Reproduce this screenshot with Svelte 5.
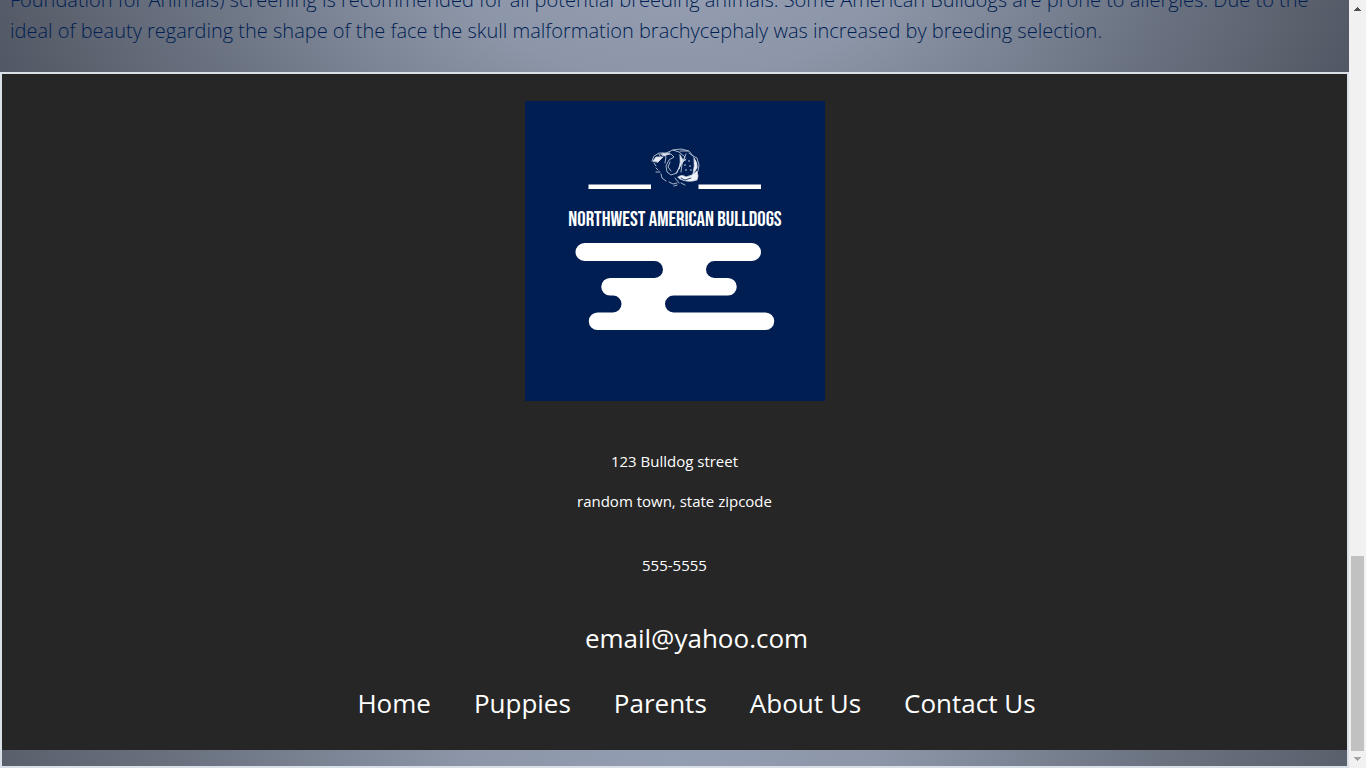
<script>
  const links = ['Home', 'Puppies', 'Parents', 'About Us', 'Contact Us'];
</script>

<div class="window">
  <div class="page">
    <section class="health">
      <p>Foundation for Animals) screening is recommended for all potential breeding animals. Some American Bulldogs are prone to allergies. Due to the ideal of beauty regarding the shape of the face the skull malformation brachycephaly was increased by breeding selection.</p>
    </section>

    <div class="frame">
      <footer>
        <svg class="logo" viewBox="0 0 300 300" role="img" aria-label="Northwest American Bulldogs">
          <rect width="300" height="300" fill="#001e52" />
          <path d="M63.500 83.500H126v4.500H63.500zM173.500 83.500H236v4.500h-62.500z" fill="#fff" />
          <g fill="none" stroke="#d3dae7" stroke-width=".8" stroke-linecap="round" stroke-linejoin="round">
            <path d="M127 60l2-5 5-3 7 0 7-3 8-1 8 2 4 5 4 2 2 7-1 6-4 5M129 62l2 3M131 67l2 2M134 53l2 4-3 4M138 52l3 4-1 6M141 54l5-1 3 3-5 3-3 6 1 6 4 3 6-2 3-8 6-6M148 49l6 2 6 5-4 8-5 8M155 50l8 0M131 71l4 0M136 73l1 4 4 3M144 81l4 2 4-1M150 77l4 5M145 61l-2 5 3 4M161 53l-4 10-1 8M164 52l4 3M149 85l3-1M156 82l4 2" />
            <path d="M128 60l3-4 7 0-5 5zM136 53l9-1-6 3zM155 54l3 5-4 9q2-7 1-14z" fill="#e8edf5" />
            <path d="M153 76q4-3 8 0 6-1 11-6l1 5-1 4q-9 3-17-1zM169 57q4 5 3 10l-4 6q2-8 1-16z" fill="#f2f5fa" />
            <path d="M156 77l4 2 6-2" stroke="#001e52" />
          </g>
          <g fill="#d3dae7">
            <circle cx="160" cy="59" r=".8" /><circle cx="164" cy="60" r=".8" /><circle cx="160" cy="64" r=".8" />
            <circle cx="165" cy="65" r=".8" /><circle cx="161" cy="69" r=".8" /><circle cx="166" cy="69" r=".8" />
          </g>
          <text x="150" y="125" text-anchor="middle">NORTHWEST AMERICAN BULLDOGS</text>
          <path d="M59.500 142H227a9 9 0 0 1 0 18H189.500a8.500 8.500 0 0 0 0 17H203a8.700 8.700 0 0 1 0 17.500H148.500a8.500 8.500 0 0 0 0 17H240.500a8.700 8.700 0 0 1 0 17.500H72.500a8.700 8.700 0 0 1 0-17.500H88a8.500 8.500 0 0 0 0-17H85a8.700 8.700 0 0 1 0-17.500H129.500a8.500 8.500 0 0 0 0-17H59.500a9 9 0 0 1 0-18z" fill="#fff" />
        </svg>

        <address>
          <p>123 Bulldog street</p>
          <p>random town, state zipcode</p>
          <p class="phone">555-5555</p>
        </address>

        <div class="links">
          <a class="email" href="mailto:email@yahoo.com">email@yahoo.com</a>
          <nav>
            {#each links as link}
              <a href="#top">{link}</a>
            {/each}
          </nav>
        </div>
      </footer>
    </div>
  </div>

  <div class="scrollbar" aria-hidden="true">
    <svg viewBox="0 0 17 17"><path d="M5 11h7v-1h-1V9h-1V8H9V7H8v1H7v1H6v1H5z" fill="#505050" /></svg>
    <div class="thumb"></div>
    <svg viewBox="0 0 17 17"><path d="M5 6h7v1h-1v1h-1v1H9v1H8V9H7V8H6V7H5z" fill="#a3a3a3" /></svg>
  </div>
</div>

<style>
  :global(body) {
    margin: 0;
    overflow: hidden;
  }

  .window {
    display: flex;
    height: 100vh;
    font-family: "Segoe UI", "Open Sans", "Noto Sans", sans-serif;
  }

  .page {
    flex: 1;
    min-width: 0;
    display: flex;
    flex-direction: column;
  }

  .health {
    display: flex;
    flex-direction: column;
    justify-content: flex-end;
    height: 72px;
    overflow: hidden;
    box-sizing: border-box;
    padding: 0 10px 26px;
    background: radial-gradient(ellipse 780px 460px at 50% -60px, #98a1b6 0%, #8d96a8 30%, #68707f 66%, #5d626f 80%, #484e5b 100%);
  }

  .health p {
    margin: 0;
    color: #001e52;
    font-size: 20px;
    font-weight: 330;
    line-height: 31px;
  }

  .frame {
    flex: 1;
    box-sizing: border-box;
    border: 2px solid #d9e0e8;
    padding-bottom: 16px;
    background: radial-gradient(ellipse 820px 500px at 50% 100%, #939db2 0%, #8d96a8 25%, #6a7280 60%, #5e6370 78%, #484e5b 100%);
  }

  footer {
    display: flex;
    flex-direction: column;
    align-items: center;
    height: 100%;
    box-sizing: border-box;
    padding-top: 27px;
    background: #262626;
    color: #fff;
  }

  .logo {
    display: block;
    width: 300px;
    height: 300px;
    flex: none;
  }

  .logo text {
    fill: #fff;
    font: 400 21px "Bebas Neue", "Roboto", sans-serif;
  }

  address {
    margin-top: 48px;
    font-size: 15px;
    font-style: normal;
    line-height: 24px;
    text-align: center;
  }

  address p {
    margin: 0 0 16px;
  }

  address .phone {
    margin: 40px 0 0;
  }

  .links {
    padding-left: 44px;
    text-align: center;
    font-size: 26px;
    line-height: 40px;
  }

  .email {
    display: block;
    margin-top: 41px;
  }

  nav {
    display: flex;
    justify-content: center;
    gap: 43px;
    margin-top: 25px;
  }

  a {
    color: #fff;
    text-decoration: none;
    white-space: nowrap;
  }

  .scrollbar {
    display: flex;
    flex-direction: column;
    width: 17px;
    flex: none;
    background: #f1f1f1;
  }

  .scrollbar svg {
    display: block;
    width: 17px;
    height: 17px;
  }

  .thumb {
    height: 195px;
    margin: auto 2px 0;
    background: #c1c1c1;
  }
</style>
